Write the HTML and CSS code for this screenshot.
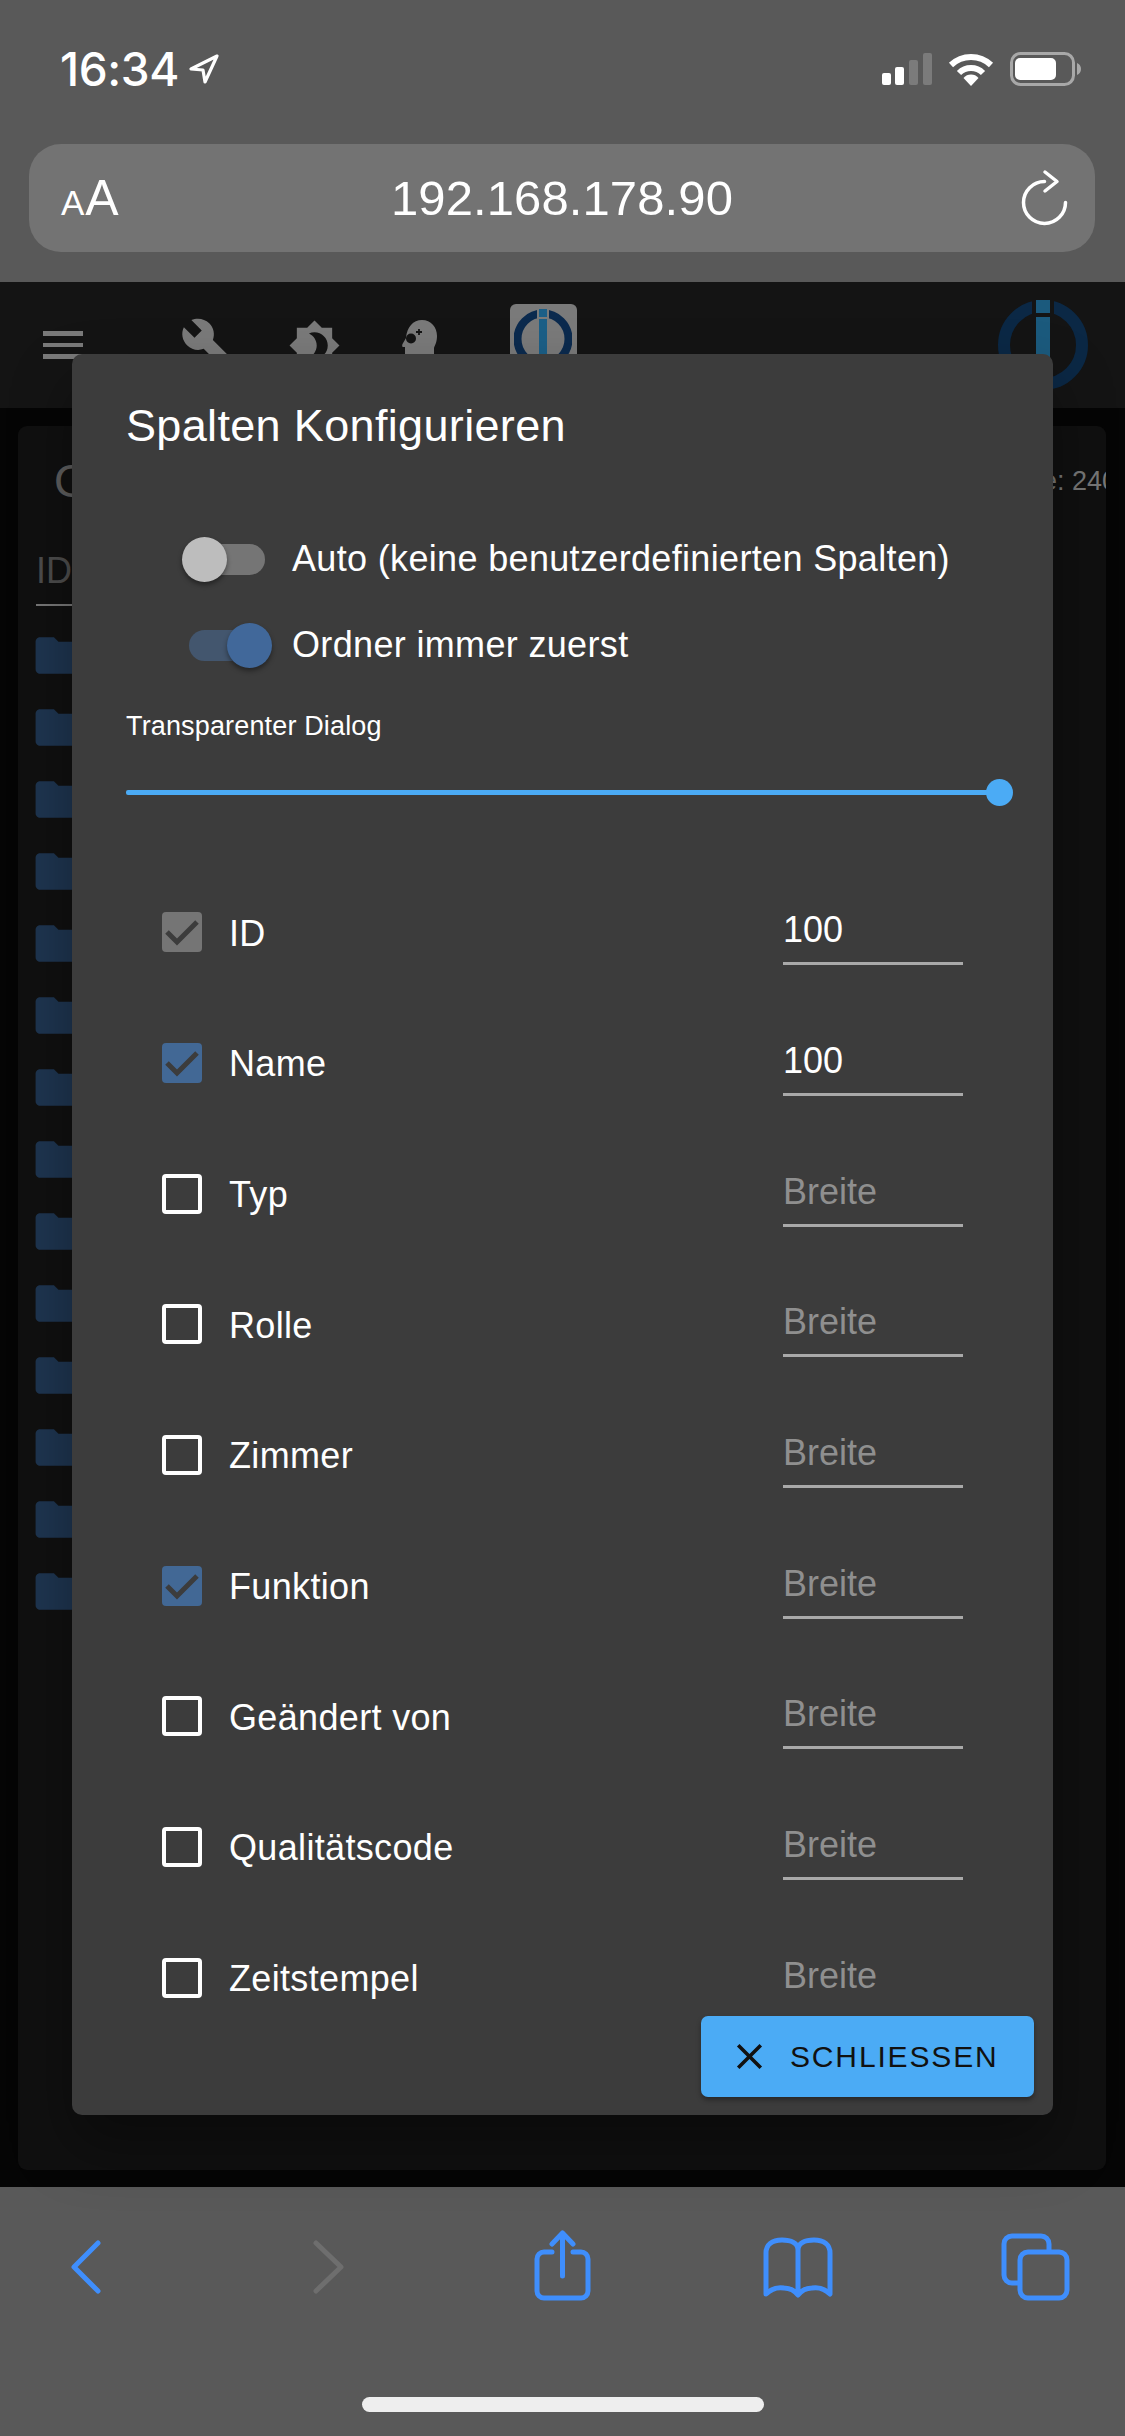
FILE: index.html
```html
<!DOCTYPE html>
<html lang="de">
<head>
<meta charset="utf-8">
<title>Spalten Konfigurieren</title>
<link rel="stylesheet" href="styles.css">
</head>
<body>
<svg class="sprite" aria-hidden="true">
  <symbol id="folder" viewBox="0 0 24 24"><path d="M10 4H4c-1.1 0-2 .9-2 2v12c0 1.1.9 2 2 2h16c1.1 0 2-.9 2-2V8c0-1.1-.9-2-2-2h-8l-2-2z"/></symbol>
  <symbol id="check" viewBox="0 0 40 40"><path d="M5 20l10 10L35 10" fill="none" stroke="#3c3c3c" stroke-width="5"/></symbol>
</svg>
<div class="phone">
  <header class="chrome-top">
    <div class="status">
      <div class="status-left">
        <span class="time">16:34</span>
        <svg class="loc" viewBox="0 0 32 32"><path d="M29 3L3 16l12 1 2 12z" fill="none" stroke="#fff" stroke-width="3.2" stroke-linejoin="round"/></svg>
      </div>
      <div class="status-right">
        <svg class="signal" viewBox="0 0 50 32">
          <rect x="0" y="20" width="9" height="12" rx="2" fill="#fff"/>
          <rect x="13" y="14" width="9" height="18" rx="2" fill="#fff"/>
          <rect x="27" y="7" width="9" height="25" rx="2" fill="#7b7b7b"/>
          <rect x="41" y="0" width="9" height="32" rx="2" fill="#7b7b7b"/>
        </svg>
        <svg class="wifi" viewBox="0 0 46 33">
          <path d="M3 12A29 29 0 0 1 43 12" fill="none" stroke="#fff" stroke-width="6"/>
          <path d="M11 20A17 17 0 0 1 35 20" fill="none" stroke="#fff" stroke-width="6"/>
          <path d="M23 33l-7.500-8A10 10 0 0 1 30.500 25z" fill="#fff"/>
        </svg>
        <svg class="battery" viewBox="0 0 71 34">
          <rect x="1.500" y="1.500" width="62" height="31" rx="9" fill="none" stroke="#a8a8a8" stroke-width="3"/>
          <rect x="5" y="6" width="41" height="22" rx="5" fill="#fff"/>
          <path d="M67 11c2.500 1 4 3 4 6s-1.500 5-4 6z" fill="#a8a8a8"/>
        </svg>
      </div>
    </div>
    <div class="urlbar">
      <div class="aa"><span class="aa-small">A</span><span class="aa-big">A</span></div>
      <div class="url">192.168.178.90</div>
      <svg class="reload" viewBox="0 0 50 58">
        <path d="M24.500 12.500A21 21 0 1 0 45.500 33.500" fill="none" stroke="#fff" stroke-width="3.500" stroke-linecap="round"/>
        <path d="M25 3l12 9.500L25 22" fill="none" stroke="#fff" stroke-width="3.500" stroke-linecap="round" stroke-linejoin="round"/>
      </svg>
    </div>
  </header>

  <main class="page">
    <div class="appbar">
      <div class="burger"><i></i><i></i><i></i></div>
      <svg class="ico-wrench" viewBox="0 0 24 24"><path d="M22.700 19l-9.100-9.100c.9-2.300.4-5-1.500-6.900-2-2-5-2.400-7.400-1.300L9 6 6 9 1.600 4.700C.4 7.100.9 10.100 2.900 12.100c1.900 1.900 4.600 2.400 6.900 1.500l9.100 9.100c.4.4 1 .4 1.400 0l2.300-2.300c.5-.4.5-1.100.1-1.400z"/></svg>
      <svg class="ico-sun" viewBox="0 0 24 24"><path d="M20 8.690V4h-4.690L12 .69 8.690 4H4v4.690L.69 12 4 15.310V20h4.690L12 23.310 15.310 20H20v-4.690L23.310 12 20 8.690zM12 18c-.89 0-1.740-.2-2.500-.55C11.560 16.500 13 14.420 13 12s-1.440-4.500-3.500-5.450C10.260 6.200 11.110 6 12 6c3.310 0 6 2.690 6 6s-2.690 6-6 6z"/></svg>
      <svg class="ico-head" viewBox="0 0 36 50">
        <path d="M3 50V27H1c-1 0-1-2-.5-3L4 18C5 7 11 0 20 0c9 0 15 7 15 16 0 6-2 9-3 12v22z" fill="#7a7a7a"/>
        <circle cx="9" cy="18.500" r="5" fill="#141414"/>
        <path d="M14 12h6M17 9v6" stroke="#141414" stroke-width="1.800"/>
      </svg>
      <div class="logo-box">
        <svg viewBox="0 0 58 72">
          <circle cx="29" cy="30" r="25.500" fill="none" stroke="#0b2a4e" stroke-width="8"/>
          <rect x="23" y="0" width="12" height="10" fill="#7a7a7a"/>
          <rect x="25" y="0" width="8" height="8" fill="#1b5f87"/>
          <rect x="25" y="10" width="8" height="50" fill="#1b5f87"/>
        </svg>
      </div>
      <svg class="logo-big" viewBox="0 0 90 90">
        <circle cx="45" cy="45" r="39" fill="none" stroke="#0b2845" stroke-width="12"/>
        <rect x="34" y="0" width="22" height="17" fill="#141414"/>
        <rect x="38" y="0" width="14" height="13" fill="#1b5a7d"/>
        <rect x="38" y="17" width="14" height="60" fill="#1b5a7d"/>
      </svg>
    </div>
    <section class="paper">
      <div class="paper-head">
        <div class="paper-title">Objekte</div>
        <div class="paper-count">Objekte: 2400</div>
      </div>
      <div class="col-head">ID</div>
      <ul class="folders">
        <li><svg><use href="#folder"/></svg></li>
        <li><svg><use href="#folder"/></svg></li>
        <li><svg><use href="#folder"/></svg></li>
        <li><svg><use href="#folder"/></svg></li>
        <li><svg><use href="#folder"/></svg></li>
        <li><svg><use href="#folder"/></svg></li>
        <li><svg><use href="#folder"/></svg></li>
        <li><svg><use href="#folder"/></svg></li>
        <li><svg><use href="#folder"/></svg></li>
        <li><svg><use href="#folder"/></svg></li>
        <li><svg><use href="#folder"/></svg></li>
        <li><svg><use href="#folder"/></svg></li>
        <li><svg><use href="#folder"/></svg></li>
        <li><svg><use href="#folder"/></svg></li>
      </ul>
    </section>

    <div class="dialog" role="dialog">
      <h2 class="dialog-title">Spalten Konfigurieren</h2>
      <div class="dialog-content">
        <div class="switch-row">
          <span class="switch"><span class="track"></span><span class="thumb"></span></span>
          <span class="switch-label">Auto (keine benutzerdefinierten Spalten)</span>
        </div>
        <div class="switch-row">
          <span class="switch on"><span class="track"></span><span class="thumb"></span></span>
          <span class="switch-label">Ordner immer zuerst</span>
        </div>
        <div class="slider-label">Transparenter Dialog</div>
        <div class="slider"><div class="slider-track"><span class="slider-thumb"></span></div></div>
        <div class="columns">
          <div class="col-row">
            <span class="box gray"><svg><use href="#check"/></svg></span>
            <span class="col-label">ID</span>
            <span class="field">100</span>
          </div>
          <div class="col-row">
            <span class="box blue"><svg><use href="#check"/></svg></span>
            <span class="col-label">Name</span>
            <span class="field">100</span>
          </div>
          <div class="col-row">
            <span class="box"></span>
            <span class="col-label">Typ</span>
            <span class="field empty">Breite</span>
          </div>
          <div class="col-row">
            <span class="box"></span>
            <span class="col-label">Rolle</span>
            <span class="field empty">Breite</span>
          </div>
          <div class="col-row">
            <span class="box"></span>
            <span class="col-label">Zimmer</span>
            <span class="field empty">Breite</span>
          </div>
          <div class="col-row">
            <span class="box blue"><svg><use href="#check"/></svg></span>
            <span class="col-label">Funktion</span>
            <span class="field empty">Breite</span>
          </div>
          <div class="col-row">
            <span class="box"></span>
            <span class="col-label">Geändert von</span>
            <span class="field empty">Breite</span>
          </div>
          <div class="col-row">
            <span class="box"></span>
            <span class="col-label">Qualitätscode</span>
            <span class="field empty">Breite</span>
          </div>
          <div class="col-row">
            <span class="box"></span>
            <span class="col-label">Zeitstempel</span>
            <span class="field empty">Breite</span>
          </div>
        </div>
      </div>
      <div class="dialog-actions">
        <button class="close-btn" type="button">
          <svg viewBox="0 0 24 24"><path d="M19 6.410L17.590 5 12 10.590 6.410 5 5 6.410 10.590 12 5 17.590 6.410 19 12 13.410 17.590 19 19 17.590 13.410 12z"/></svg>
          <span>SCHLIESSEN</span>
        </button>
      </div>
    </div>
  </main>

  <footer class="chrome-bottom">
    <nav class="tools">
      <svg viewBox="0 0 80 80"><path class="tool" d="M52 15L28 39l24 24"/></svg>
      <svg viewBox="0 0 80 80"><path class="tool off" d="M33 15l25 24-25 24"/></svg>
      <svg viewBox="0 0 80 80"><path class="tool" d="M31 24H23a7 7 0 0 0-7 7V63a7 7 0 0 0 7 7H60a7 7 0 0 0 7-7V31a7 7 0 0 0-7-7H52M41.500 48V5M31 16L41.500 5 52 16"/></svg>
      <svg viewBox="0 0 80 80"><path class="tool" d="M40 22c0-7-7-10-16-10-10 0-16 5-16 13v41c5-5 12-7 18-6 6 0 11 3 14 7 3-4 8-7 14-7 6-1 13 1 18 6V25c0-8-6-13-16-13-9 0-16 3-16 10zM40 22V62"/></svg>
      <svg viewBox="0 0 80 80"><path class="tool" d="M54 22v-6a8 8 0 0 0-8-8H17a8 8 0 0 0-8 8V47a8 8 0 0 0 8 8h6"/><rect class="tool" x="25" y="24" width="47" height="46" rx="8"/></svg>
    </nav>
    <div class="home-bar"></div>
  </footer>
</div>
</body>
</html>
```
FILE: styles.css
```css
* { box-sizing: border-box; }
html, body { margin: 0; padding: 0; background: #050505; }
body { font-family: "Liberation Sans", Arial, sans-serif; color: #fff; }
.sprite { display: none; }

.phone { width: 1125px; height: 2436px; display: flex; flex-direction: column; overflow: hidden; }

/* Safari top chrome */
.chrome-top { height: 282px; background: #595959; padding-top: 38px; flex: none; }
.status { height: 62px; margin-bottom: 44px; padding: 0 44px 0 60px; display: flex; justify-content: space-between; align-items: center; }
.status-left { display: flex; align-items: center; gap: 9px; }
.time { font-family: Inter, "Liberation Sans", sans-serif; font-weight: 500; font-size: 46px; letter-spacing: -.4px; line-height: 62px; }
.loc { width: 32px; height: 32px; }
.status-right { display: flex; align-items: center; }
.signal { width: 50px; height: 32px; margin-right: 16px; }
.wifi { width: 46px; height: 33px; margin-right: 16px; }
.battery { width: 71px; height: 34px; }

.urlbar { height: 108px; margin: 0 30px 0 29px; padding: 0 28px 0 32px; background: #737373; border-radius: 32px; display: grid; grid-template-columns: 1fr auto 1fr; align-items: center; }
.aa { display: flex; align-items: baseline; line-height: 1; }
.aa-small { font-size: 35px; margin-right: 1px; }
.aa-big { font-size: 50px; }
.url { font-size: 49px; line-height: 60px; letter-spacing: .1px; margin-left: -4px; }
.reload { width: 50px; height: 58px; justify-self: end; margin-right: -3px; }

/* Dimmed page */
.page { flex: 1; position: relative; min-height: 0; background: #050505; }
.appbar { height: 126px; background: #141414; display: flex; align-items: center; padding-left: 43px; position: relative; }
.burger { width: 40px; display: flex; flex-direction: column; gap: 7px; margin-right: 97px; }
.burger i { display: block; height: 4.500px; background: #7a7a7a; }
.ico-wrench { width: 58px; height: 58px; fill: #7a7a7a; flex: none; margin-right: 50px; }
.ico-sun { width: 53px; height: 53px; fill: #7a7a7a; flex: none; margin-right: 61px; }
.ico-head { width: 36px; height: 50px; flex: none; margin-right: 72px; margin-top: -1px; }
.logo-box { width: 67px; height: 82px; background: #7a7a7a; border-radius: 6px; padding: 5px 5px 0 4px; flex: none; margin-right: 421px; }
.logo-box svg { display: block; width: 58px; height: 72px; }
.logo-big { width: 90px; height: 90px; flex: none; }

.paper { height: 1744px; margin: 18px 19px 17px 18px; padding: 25px 0 0 18px; background: #101010; border-radius: 9px; overflow: hidden; }
.paper-head { display: flex; align-items: center; white-space: nowrap; height: 60px; }
.paper-title { width: 928px; padding-left: 18px; flex: none; font-size: 47px; line-height: 60px; color: #5e5e5e; }
.paper-count { font-size: 27px; color: #777; flex: none; }
.col-head { width: 220px; margin-top: 38px; padding-bottom: 11px; border-bottom: 2px solid #777; font-size: 36px; line-height: 44px; color: #4d4d4d; }
.folders { list-style: none; margin: 22px 0 0 -5px; padding: 0; }
.folders li { height: 72px; }
.folders svg { display: block; width: 55px; height: 55px; fill: #1e3550; }

/* Dialog */
.dialog { position: absolute; top: 72px; left: 72px; width: 981px; height: 1761px; background: #3c3c3c; border-radius: 10px; display: flex; flex-direction: column; box-shadow: 0 30px 60px rgba(0,0,0,.35); }
.dialog-title { margin: 0; padding: 46px 54px 0; font-size: 45px; font-weight: 400; line-height: 52px; letter-spacing: .0075em; flex: none; }
.dialog-content { flex: 1; min-height: 0; overflow: hidden; padding-top: 64px; }
.switch-row { height: 86px; display: flex; align-items: center; padding-left: 110px; font-size: 36px; letter-spacing: .00938em; }
.switch { position: relative; width: 90px; height: 45px; margin-right: 20px; flex: none; }
.track { position: absolute; left: 7px; right: 7px; top: 7px; height: 31px; border-radius: 16px; background: #757575; }
.thumb { position: absolute; left: 0; top: 0; width: 45px; height: 45px; border-radius: 50%; background: #bdbdbd; box-shadow: 0 3px 5px rgba(0,0,0,.4); }
.switch.on .track { background: #43566e; }
.switch.on .thumb { left: 45px; background: #41689a; }

.slider-label { margin: 21px 0 0 54px; font-size: 27px; line-height: 34px; letter-spacing: .15px; }
.slider { margin: 22px 0 0 54px; height: 54px; display: flex; align-items: center; }
.slider-track { position: relative; width: 873px; height: 5px; background: #4babf5; border-radius: 2px; }
.slider-thumb { position: absolute; right: -14px; top: -11px; width: 27px; height: 27px; border-radius: 50%; background: #4babf5; }

.columns { margin-top: 48px; }
.col-row { height: 130.670px; display: flex; align-items: center; padding: 0 90px; font-size: 36px; letter-spacing: .00938em; }
.box { width: 40px; height: 40px; border: 4.500px solid #fff; border-radius: 4px; margin-right: 27px; flex: none; }
.box svg { display: block; width: 40px; height: 40px; }
.box.gray, .box.blue { border: 0; }
.box.gray { background: #757575; }
.box.blue { background: #426895; }
.col-label { flex: 1; padding-top: 3px; }
.field { width: 180px; height: 66px; border-bottom: 3px solid #a9a9a9; line-height: 61px; font-size: 36px; letter-spacing: 0; flex: none; }
.field.empty { color: #8f8f8f; }

.dialog-actions { flex: none; display: flex; justify-content: flex-end; padding: 13px 19px 18px; }
.close-btn { width: 333px; height: 81px; display: flex; align-items: center; padding: 0 0 0 27px; border: 0; border-radius: 7px; background: #4babf5; color: #111; font: 400 30px/1 "Liberation Sans", Arial, sans-serif; letter-spacing: 1.85px; box-shadow: 0 3px 5px rgba(0,0,0,.35); }
.close-btn svg { width: 43px; height: 43px; fill: #111; margin-right: 19px; flex: none; }

/* Safari bottom chrome */
.chrome-bottom { height: 249px; background: #595959; flex: none; padding-top: 41px; }
.tools { display: flex; justify-content: space-between; padding: 0 50px 0 46px; height: 80px; }
.tools svg { width: 80px; height: 80px; display: block; }
.tool { fill: none; stroke: #3f8efc; stroke-width: 5; stroke-linecap: round; stroke-linejoin: round; }
.tool.off { stroke: #6e6e6e; }
.home-bar { width: 402px; height: 15px; margin: 89px 0 0 362px; background: #eee; border-radius: 8px; }
```
